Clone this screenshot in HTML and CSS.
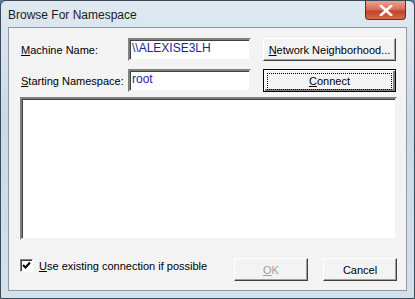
FILE: index.html
```html
<!DOCTYPE html>
<html>
<head>
  <meta charset="utf-8">
  <title>Browse For Namespace</title>
  <link rel="stylesheet" href="styles.css">
</head>
<body>
  <div class="window">
    <!-- title bar -->
    <div class="titlebar">
      <span class="title">Browse For Namespace</span>
      <span class="close">
        <svg width="14" height="11" viewBox="0 0 14 11">
          <path d="M2 1 L12 10 M12 1 L2 10" stroke="#fff" stroke-width="2.6" stroke-linecap="square"/>
        </svg>
      </span>
    </div>

    <!-- client area -->
    <div class="client">
      <div class="fields">
        <label class="lbl"><u>M</u>achine Name:</label>
        <div class="edit">\\ALEXISE3LH</div>
        <button class="btn"><u>N</u>etwork Neighborhood...</button>

        <label class="lbl"><u>S</u>tarting Namespace:</label>
        <div class="edit">root</div>
        <button class="btn default"><span class="focus"><u>C</u>onnect</span></button>
      </div>

      <div class="listbox"></div>

      <div class="footer">
        <label class="check">
          <span class="box">
            <svg width="9" height="9" viewBox="0 0 9 9">
              <path d="M1 4 L3.5 6.5 L8 1.5" stroke="#000" stroke-width="2" fill="none"/>
            </svg>
          </span>
          <span><u>U</u>se existing connection if possible</span>
        </label>
        <div class="buttons">
          <button class="btn disabled"><u>O</u>K</button>
          <button class="btn">Cancel</button>
        </div>
      </div>
    </div>
  </div>
</body>
</html>
```

FILE: styles.css
```css
body {
  margin: 0;
  background: #5a7e96;
  font-family: "Liberation Sans", Arial, sans-serif;
  font-size: 11px;
  color: #000;
}
.window {
  width: 415px;
  height: 299px;
  box-sizing: border-box;
  border: 1px solid #3c4a58;
  border-radius: 6px 6px 2px 2px;
  background: linear-gradient(180deg, #dfe9f1 0%, #c9dae6 40%, #d3e1ec 100%);
  padding: 0 7px 7px 7px;
  display: flex;
  flex-direction: column;
}
.titlebar {
  height: 26px;
  display: flex;
  align-items: center;
  justify-content: space-between;
}
.title {
  font-family: "Liberation Sans", Arial, sans-serif;
  font-size: 12px;
  color: #1b1b1b;
  margin-top: 1px;
}
.close {
  width: 41px;
  height: 19px;
  margin-top: -7px;
  margin-right: 1px;
  box-sizing: border-box;
  border: 1px solid #6a2a20;
  border-top: none;
  border-radius: 0 0 4px 4px;
  background: linear-gradient(180deg, #e8a494 0%, #d46a52 50%, #c0432a 55%, #d2694c 100%);
  display: flex;
  align-items: center;
  justify-content: center;
}
.client {
  flex: 1;
  background: #f3f3f3;
  border: 1px solid #8a9aa8;
  padding: 10px 10px 9px 11px;
  display: flex;
  flex-direction: column;
}
.fields {
  display: grid;
  grid-template-columns: 100px 123px 137px;
  column-gap: 8px;
  row-gap: 8px;
  align-items: center;
}
.fields .btn {
  margin-left: 4px;
}
.lbl {
  padding-left: 1px;
  white-space: nowrap;
}
.edit {
  height: 23px;
  box-sizing: border-box;
  background: #fff;
  border: 2px solid;
  border-color: #808080 #f3f3f3 #f3f3f3 #808080;
  box-shadow: inset 1px 1px 0 #404040;
  color: #1e1e9c;
  font-size: 12px;
  padding: 0 2px;
  line-height: 17px;
}
.btn {
  font-family: "Liberation Sans", Arial, sans-serif;
  font-size: 11px;
  color: #000;
  height: 23px;
  white-space: nowrap;
  box-sizing: border-box;
  background: #f3f3f3;
  border: 1px solid;
  border-color: #fff #404040 #404040 #fff;
  box-shadow: inset -1px -1px 0 #a0a0a0;
  padding: 0;
}
.btn.default {
  border: 1px solid #000;
  box-shadow: inset 1px 1px 0 #fff, inset -2px -2px 0 #808080;
  padding: 3px;
}
.focus {
  display: block;
  height: 15px;
  line-height: 14px;
  border: 1px dotted #000;
}
.btn.disabled {
  color: #a0a0a0;
}
.listbox {
  height: 143px;
  margin-top: 5px;
  box-sizing: border-box;
  background: #fff;
  border: 2px solid;
  border-color: #808080 #f3f3f3 #f3f3f3 #808080;
  box-shadow: inset 1px 1px 0 #404040;
  width: 377px;
}
.footer {
  margin-top: auto;
  display: flex;
  align-items: center;
  justify-content: space-between;
  width: 377px;
}
.check {
  display: flex;
  align-items: center;
  gap: 6px;
  margin-left: 0;
  margin-top: -8px;
}
.box {
  width: 13px;
  height: 13px;
  box-sizing: border-box;
  background: #fff;
  border: 1px solid;
  border-color: #808080 #fff #fff #808080;
  box-shadow: inset 1px 1px 0 #404040;
  display: flex;
  align-items: center;
  justify-content: center;
}
.buttons {
  display: flex;
  gap: 15px;
}
.buttons .btn {
  width: 74px;
}
```
